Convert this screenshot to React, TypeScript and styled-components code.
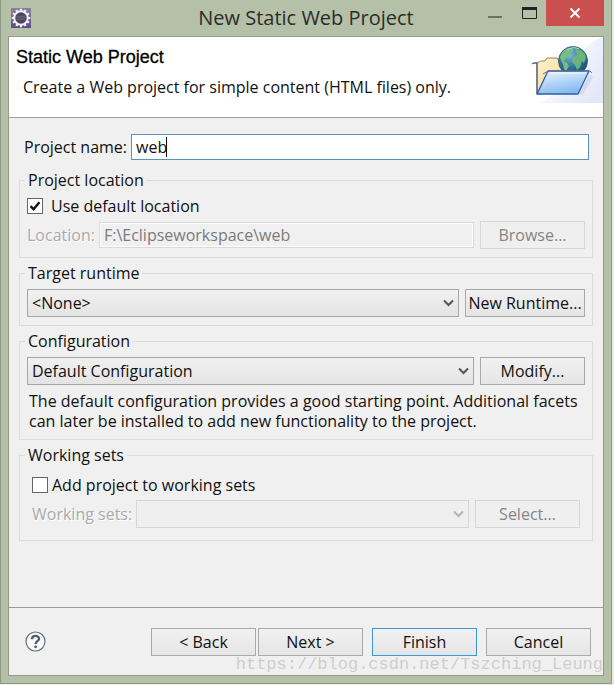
import React from "react";
import styled, { createGlobalStyle } from "styled-components";

const GlobalStyle = createGlobalStyle`
  *, *::before, *::after { box-sizing: border-box; }
  body {
    margin: 0;
    background: #eceee6;
    color: #111;
    font: 16px/20px "Open Sans", "Noto Sans", sans-serif;
  }
  button, input, select { font: inherit; color: inherit; }
`;

const Frame = styled.div`
  display: flex;
  flex-direction: column;
  min-height: calc(100vh - 1px);
  margin: 0 2px 1px 0;
  padding: 0 7px 7px;
  border: 1px solid #8e9985;
  border-top: 0;
  background: #b5c0a9;
`;

const TitleBar = styled.header`
  display: grid;
  grid-template-columns: 1fr auto 1fr;
  align-items: start;
  height: 36px;
`;

const AppIcon = styled.svg`
  display: block;
  margin: 8px 0 0 3px;
`;

const WindowTitle = styled.h1`
  margin: 0;
  color: #2a2d28;
  font-size: 20px;
  font-weight: 400;
  line-height: 36px;
`;

const WindowControls = styled.div`
  display: flex;
  justify-content: flex-end;
`;

const WindowButton = styled.button<{ $close?: boolean }>`
  display: flex;
  align-items: center;
  justify-content: center;
  width: ${(p) => (p.$close ? 58 : 34)}px;
  height: 26px;
  padding: 0;
  border: 0;
  background: ${(p) => (p.$close ? "#c9504f" : "transparent")};
`;

const MinimizeButton = styled(WindowButton)`
  height: 34px;
`;

const Client = styled.main`
  position: relative;
  display: flex;
  flex: 1;
  flex-direction: column;
  border: 1px solid #919a8b;
  background: #f0f0f0;
`;

const Banner = styled.section`
  display: flex;
  justify-content: space-between;
  height: 81px;
  border-bottom: 1px solid #a0a0a0;
  background: #fff;
`;

const BannerText = styled.div`
  padding: 10px 7px;
`;

const BannerTitle = styled.h2`
  margin: 0;
  color: #000;
  font: 400 18px/20px "Liberation Sans", sans-serif;
  -webkit-text-stroke: 0.3px #000;
`;

const BannerMessage = styled.p`
  margin: 10px 0 0 7px;
`;

const Form = styled.form`
  display: flex;
  flex: 1;
  flex-direction: column;
`;

const Page = styled.div`
  display: flex;
  flex: 1;
  flex-direction: column;
  gap: 5px;
  padding: 16px 10px 0;
`;

const NameRow = styled.div`
  display: flex;
  align-items: center;
  gap: 4px;
  margin-bottom: 5px;
  padding: 0 4px 0 5px;
`;

const NameField = styled.div`
  position: relative;
  display: flex;
  flex: 1;
`;

const Caret = styled.span`
  position: absolute;
  top: 3px;
  left: 35px;
  width: 1px;
  height: 20px;
  background: #000;
`;

const TextBox = styled.input`
  flex: 1;
  min-width: 0;
  height: 26px;
  padding: 0 4px;
  border: 1px solid #5b93bf;
  border-radius: 0;
  outline: 0;
  background: #fff;
  &:disabled {
    border-color: #d9d9d9;
    background: #f0f0f0;
    box-shadow: inset 0 0 0 1px #fff;
    color: #7b7b7b;
  }
`;

const Group = styled.fieldset`
  min-width: 0;
  margin: 0;
  padding: 0;
  border: 1px solid #dcdcdc;
`;

const Legend = styled.legend`
  margin-left: 5px;
  padding: 0 3px;
`;

const GroupBody = styled.div<{ $inset?: boolean }>`
  display: flex;
  flex-direction: column;
  gap: 5px;
  padding: ${(p) => (p.$inset ? "10px 12px 12px" : "6px 7px 8px")};
`;

const Row = styled.div<{ $gap?: number }>`
  display: flex;
  align-items: center;
  gap: ${(p) => p.$gap ?? 6}px;
`;

const Field = styled.div`
  display: flex;
  flex: 1;
  align-items: center;
  gap: 4px;
  min-width: 0;
`;

const DimLabel = styled.label`
  color: #aaa;
  text-shadow: 1px 1px 0 #fff;
`;

const CheckBox = styled.input`
  appearance: none;
  flex: none;
  width: 16px;
  height: 16px;
  margin: 0;
  border: 1px solid #666;
  background: #fff;
  &:checked {
    background: #fff
      url("data:image/svg+xml,%3Csvg xmlns='http://www.w3.org/2000/svg' viewBox='0 0 14 14'%3E%3Cpath d='M2.5 7.2 5.6 10.2 11.4 3.3' fill='none' stroke='%23151515' stroke-width='2.4'/%3E%3C/svg%3E");
  }
`;

const SelectWrap = styled.div`
  display: grid;
  flex: 1;
  min-width: 0;
  align-items: center;
  > * { grid-area: 1 / 1; }
  > svg { justify-self: end; margin-right: 5px; pointer-events: none; }
`;

const SelectBox = styled.select`
  appearance: none;
  width: 100%;
  height: 28px;
  padding: 0 24px 0 4px;
  border: 1px solid #a6a6a6;
  border-radius: 0;
  background: linear-gradient(#f1f1f1, #e4e4e4);
  &:disabled {
    border-color: #d6d6d6;
    background: #efefef;
    opacity: 1;
  }
`;

const Button = styled.button<{ $wide?: boolean; $primary?: boolean }>`
  flex: none;
  width: ${(p) => (p.$wide ? 120 : 105)}px;
  height: 28px;
  padding: 0;
  border: 1px solid ${(p) => (p.$primary ? "#3c97d6" : "#a9a9a9")};
  background: linear-gradient(#f1f1f1, #e5e5e5);
  white-space: nowrap;
  &:disabled {
    border-color: #d6d6d6;
    background: #efefef;
    color: #858585;
  }
`;

const Description = styled.p`
  margin: 0;
  padding: 1px 2px 0;
`;

const Footer = styled.footer`
  display: flex;
  align-items: center;
  justify-content: space-between;
  height: 68px;
  padding: 0 12px 0 16px;
  border-top: 1px solid #999;
`;

const HelpButton = styled.button`
  display: flex;
  padding: 0;
  border: 0;
  background: none;
`;

const Actions = styled.div`
  display: flex;
  gap: 9px;
`;

const Watermark = styled.div`
  position: absolute;
  right: 0;
  bottom: 0;
  color: rgba(160, 160, 160, 0.45);
  font: 17px/20px "Liberation Mono", monospace;
  pointer-events: none;
`;

function Chevron({ dim }: { dim?: boolean }) {
  return (
    <svg width="11" height="8" viewBox="0 0 11 8" aria-hidden="true">
      <path d="M1 1.5 5.5 6 10 1.5" fill="none" stroke={dim ? "#b4b4b4" : "#555"} strokeWidth="2" />
    </svg>
  );
}

function GearLogo() {
  const teeth = Array.from({ length: 12 }, (_, i) => i * 30);
  return (
    <AppIcon width="20" height="20" viewBox="0 0 20 20" aria-hidden="true">
      <defs>
        <linearGradient id="gear-bg" x1="0" y1="0" x2="0" y2="1">
          <stop offset="0" stopColor="#8a8298" />
          <stop offset="1" stopColor="#5c4b85" />
        </linearGradient>
      </defs>
      <rect width="20" height="20" fill="url(#gear-bg)" />
      {teeth.map((a) => (
        <rect key={a} x="8.9" y="0.7" width="2.2" height="3.5" fill="#f1eff5" transform={`rotate(${a} 10 10)`} />
      ))}
      <circle cx="10" cy="10" r="6.7" fill="#4a4460" stroke="#f1eff5" strokeWidth="1.9" />
      <path d="M5.6 8.3h8.8M5 10h10M5.6 11.7h8.8" stroke="#77738a" strokeWidth="0.7" />
    </AppIcon>
  );
}

function FolderGlobe() {
  return (
    <svg width="74" height="66" viewBox="0 0 74 66" aria-hidden="true">
      <defs>
        <linearGradient id="glow" x1="0.2" y1="0.2" x2="1" y2="0.7">
          <stop offset="0" stopColor="#fff" />
          <stop offset="1" stopColor="#e3e8f9" />
        </linearGradient>
        <linearGradient id="paper" x1="0" y1="0" x2="1" y2="1">
          <stop offset="0" stopColor="#fff3cf" />
          <stop offset="1" stopColor="#efcd87" />
        </linearGradient>
        <linearGradient id="front" x1="0" y1="0" x2="0.4" y2="1">
          <stop offset="0" stopColor="#edf7ff" />
          <stop offset="1" stopColor="#86bbef" />
        </linearGradient>
        <radialGradient id="sea" cx="0.4" cy="0.3" r="0.75">
          <stop offset="0" stopColor="#7cb4cc" />
          <stop offset="0.6" stopColor="#286f98" />
          <stop offset="1" stopColor="#174b67" />
        </radialGradient>
      </defs>
      <path d="M8 66C42 58 40 10 74 0V66Z" fill="url(#glow)" />
      <path d="M49 57 61 37 64 40 54 58Z" fill="#c4c9dd" opacity="0.5" />
      <path d="M8 57V26L12 24 16 24 18 21H28L30 24H46V54Z" fill="url(#paper)" stroke="#a8823c" />
      <path d="M3 27 5 26H8V57" fill="none" stroke="#536193" strokeWidth="1.3" />
      <circle cx="44" cy="24" r="14.5" fill="url(#sea)" stroke="#2d5d60" strokeWidth="0.8" />
      <path d="M31 21C32 15 37 11 42 11L45 13 42 16 40 17 41 20 37 21 35 24 38 26 40 29 37 34 35 32 34 27Z" fill="#76bd85" />
      <path d="M46 12 52 13 56 17 57 21 55 26 53 24 51 30 48 33 46 28 43 25 44 20 48 18Z" fill="#68b47c" />
      <path d="M38 13Q44 9 50 12" stroke="#b6dce2" fill="none" />
      <path d="M8 57 19 34H60L49 57Z" fill="url(#front)" stroke="#315da8" strokeWidth="1.3" strokeLinejoin="round" />
      <path d="M14 37 19 34H61L63 36" fill="none" stroke="#68758b" />
      <path d="M21 36H57" stroke="#fff" opacity="0.8" />
    </svg>
  );
}

export default function App() {
  return (
    <>
      <GlobalStyle />
      <Frame>
        <TitleBar>
          <GearLogo />
          <WindowTitle>New Static Web Project</WindowTitle>
          <WindowControls>
            <MinimizeButton type="button" aria-label="Minimize">
              <svg width="14" height="2" viewBox="0 0 14 2"><path d="M0 1H14" stroke="#6a7262" strokeWidth="2" /></svg>
            </MinimizeButton>
            <WindowButton type="button" aria-label="Maximize">
              <svg width="15" height="12" viewBox="0 0 15 12"><path d="M0.5 1V11.5H14.5V1" fill="none" stroke="#222" /><path d="M0 1.5H15" stroke="#222" strokeWidth="3" /></svg>
            </WindowButton>
            <WindowButton type="button" aria-label="Close" $close>
              <svg width="12" height="10" viewBox="0 0 12 10"><path d="M1.5 0.5 10.5 9.5M10.5 0.5 1.5 9.5" stroke="#fff" strokeWidth="2" /></svg>
            </WindowButton>
          </WindowControls>
        </TitleBar>
        <Client>
          <Banner>
            <BannerText>
              <BannerTitle>Static Web Project</BannerTitle>
              <BannerMessage>Create a Web project for simple content (HTML files) only.</BannerMessage>
            </BannerText>
            <FolderGlobe />
          </Banner>
          <Form onSubmit={(e) => e.preventDefault()}>
            <Page>
              <NameRow>
                <label htmlFor="name">Project name:</label>
                <NameField>
                  <TextBox id="name" defaultValue="web" />
                  <Caret />
                </NameField>
              </NameRow>
              <Group>
                <Legend>Project location</Legend>
                <GroupBody>
                  <Row $gap={8}>
                    <CheckBox type="checkbox" id="use-default" defaultChecked />
                    <label htmlFor="use-default">Use default location</label>
                  </Row>
                  <Row>
                    <Field>
                      <DimLabel htmlFor="location">Location:</DimLabel>
                      <TextBox id="location" defaultValue="F:\Eclipseworkspace\web" disabled />
                    </Field>
                    <Button type="button" disabled>Browse...</Button>
                  </Row>
                </GroupBody>
              </Group>
              <Group>
                <Legend>Target runtime</Legend>
                <GroupBody>
                  <Row>
                    <SelectWrap>
                      <SelectBox aria-label="Target runtime"><option>&lt;None&gt;</option></SelectBox>
                      <Chevron />
                    </SelectWrap>
                    <Button type="button" $wide>New Runtime...</Button>
                  </Row>
                </GroupBody>
              </Group>
              <Group>
                <Legend>Configuration</Legend>
                <GroupBody>
                  <Row>
                    <SelectWrap>
                      <SelectBox aria-label="Configuration"><option>Default Configuration</option></SelectBox>
                      <Chevron />
                    </SelectWrap>
                    <Button type="button">Modify...</Button>
                  </Row>
                  <Description>
                    The default configuration provides a good starting point. Additional facets can later be installed to add new functionality to the project.
                  </Description>
                </GroupBody>
              </Group>
              <Group>
                <Legend>Working sets</Legend>
                <GroupBody $inset>
                  <Row $gap={4}>
                    <CheckBox type="checkbox" id="add-sets" />
                    <label htmlFor="add-sets">Add project to working sets</label>
                  </Row>
                  <Row>
                    <Field>
                      <DimLabel htmlFor="sets">Working sets:</DimLabel>
                      <SelectWrap>
                        <SelectBox id="sets" disabled />
                        <Chevron dim />
                      </SelectWrap>
                    </Field>
                    <Button type="button" disabled>Select...</Button>
                  </Row>
                </GroupBody>
              </Group>
            </Page>
            <Footer>
              <HelpButton type="button" aria-label="Help">
                <svg width="21" height="21" viewBox="0 0 21 21">
                  <circle cx="10.5" cy="10.5" r="9.5" fill="#f8f9fc" stroke="#697180" strokeWidth="1.2" />
                  <path d="M7 8.2C7 3.7 14 3.9 14 7.8 14 10.2 10.6 10.2 10.6 13" fill="none" stroke="#4f5a73" strokeWidth="2.3" />
                  <circle cx="10.6" cy="15.8" r="1.4" fill="#4f5a73" />
                </svg>
              </HelpButton>
              <Actions>
                <Row $gap={2}>
                  <Button type="button">&lt; Back</Button>
                  <Button type="button">Next &gt;</Button>
                </Row>
                <Button type="submit" $primary>Finish</Button>
                <Button type="button">Cancel</Button>
              </Actions>
            </Footer>
          </Form>
          <Watermark>https://blog.csdn.net/Tszching_Leung</Watermark>
        </Client>
      </Frame>
    </>
  );
}
